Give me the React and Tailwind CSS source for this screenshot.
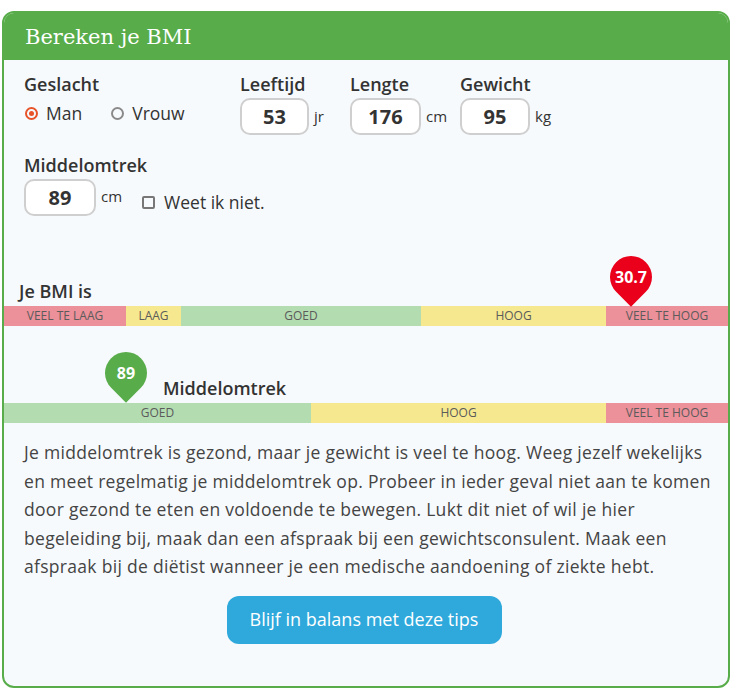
const SANS = { fontFamily: '"Open Sans", "Noto Sans", sans-serif' };

const BMI_BANDS = [
  { label: 'VEEL TE LAAG', w: 122, color: 'bg-[#ec9099]' },
  { label: 'LAAG', w: 55, color: 'bg-[#f6e88f]' },
  { label: 'GOED', w: 240, color: 'bg-[#b3dcb1]' },
  { label: 'HOOG', w: 185, color: 'bg-[#f6e88f]' },
  { label: 'VEEL TE HOOG', w: 122, color: 'bg-[#ec9099]' },
];

const WAIST_BANDS = [
  { label: 'GOED', w: 307, color: 'bg-[#b3dcb1]' },
  { label: 'HOOG', w: 295, color: 'bg-[#f6e88f]' },
  { label: 'VEEL TE HOOG', w: 122, color: 'bg-[#ec9099]' },
];

function Bar({ bands }) {
  return (
    <div className="flex h-[20px] w-full">
      {bands.map((b, i) => (
        <div
          key={i}
          style={{ width: b.w }}
          className={`${b.color} flex items-center justify-center text-[12px] leading-none text-[#5b5b5b]`}
        >
          {b.label}
        </div>
      ))}
    </div>
  );
}

function Pin({ value, color, left, top }) {
  return (
    <div className="absolute h-[52px] w-[42px]" style={{ left, top }}>
      <div
        className={`absolute left-0 top-0 h-[42px] w-[42px] rotate-45 rounded-full rounded-br-none ${color}`}
      />
      <div className="absolute left-0 top-0 flex h-[42px] w-[42px] items-center justify-center text-[16px] font-bold text-white">
        {value}
      </div>
    </div>
  );
}

function NumberField({ label, value, unit, width }) {
  return (
    <div className="flex flex-col">
      <span className="text-[18px] font-semibold leading-[22px] text-[#333]">{label}</span>
      <div className="mt-[3px] flex items-center">
        <div
          style={{ width }}
          className="flex h-[37px] items-center justify-center rounded-[10px] border-2 border-[#cfcfcf] bg-white text-[20px] font-bold text-[#333]"
        >
          {value}
        </div>
        <span className="ml-[5px] text-[15px] text-[#333]">{unit}</span>
      </div>
    </div>
  );
}

export default function App() {
  return (
    <div className="min-h-[695px] bg-white pl-[2px] pt-[11px]" style={SANS}>
      <div className="flex h-[677px] w-[728px] flex-col overflow-hidden rounded-[12px] border-2 border-[#58ad4a] bg-[#f7fafc]">
        <div className="flex h-[47px] shrink-0 items-center bg-[#58ad4a] pl-[21px] pt-[2px]">
          <h1
            className="text-[21px] text-white"
            style={{ fontFamily: '"DejaVu Serif", serif' }}
          >
            Bereken je BMI
          </h1>
        </div>

        <div className="flex pl-[20px] pt-[13px]">
          <div className="flex w-[216px] flex-col">
            <span className="text-[18px] font-semibold leading-[22px] text-[#333]">Geslacht</span>
            <div className="mt-[5px] flex items-center text-[17.5px] text-[#333]">
              <span className="ml-[1px] flex h-[13px] w-[13px] items-center justify-center rounded-full border-2 border-[#e8542a]">
                <span className="h-[5px] w-[5px] rounded-full bg-[#e8542a]" />
              </span>
              <span className="ml-[8px]">Man</span>
              <span className="ml-[29px] h-[13px] w-[13px] rounded-full border-2 border-[#8a8a8a]" />
              <span className="ml-[8px]">Vrouw</span>
            </div>
          </div>
          <div className="flex">
            <div className="w-[110px]">
              <NumberField label="Leeftijd" value="53" unit="jr" width={69} />
            </div>
            <div className="w-[110px]">
              <NumberField label="Lengte" value="176" unit="cm" width={71} />
            </div>
            <NumberField label="Gewicht" value="95" unit="kg" width={70} />
          </div>
        </div>

        <div className="flex flex-col pl-[20px] pt-[19px]">
          <span className="text-[18px] font-semibold leading-[22px] text-[#333]">Middelomtrek</span>
          <div className="mt-[3px] flex items-start">
            <div className="flex h-[37px] w-[72px] items-center justify-center rounded-[10px] border-2 border-[#cfcfcf] bg-white text-[20px] font-bold text-[#333]">
              89
            </div>
            <span className="ml-[5px] mt-[6px] text-[15px] text-[#333]">cm</span>
            <span className="ml-[20px] mt-[17px] h-[13px] w-[13px] rounded-[2px] border-2 border-[#777]" />
            <span className="ml-[9px] mt-[10px] text-[17.5px] text-[#333]">Weet ik niet.</span>
          </div>
        </div>

        <div className="relative mt-[64px] flex flex-col">
          <span className="pl-[15px] text-[18px] font-semibold leading-[22px] text-[#333]">Je BMI is</span>
          <div className="mt-[4px]">
            <Bar bands={BMI_BANDS} />
          </div>
          <Pin value="30.7" color="bg-[#ea001b]" left={606} top={-24} />
        </div>

        <div className="relative mt-[51px] flex flex-col">
          <span className="pl-[159px] text-[18px] font-semibold leading-[22px] text-[#333]">Middelomtrek</span>
          <div className="mt-[4px]">
            <Bar bands={WAIST_BANDS} />
          </div>
          <Pin value="89" color="bg-[#58ad4a]" left={101} top={-25} />
        </div>

        <p className="mt-[15px] pl-[20px] pr-[12px] text-[17.5px] leading-[28.5px] tracking-[0.3px] text-[#444]">
          Je middelomtrek is gezond, maar je gewicht is veel te hoog. Weeg jezelf wekelijks en meet regelmatig je middelomtrek op. Probeer in ieder geval niet aan te komen door gezond te eten en voldoende te bewegen. Lukt dit niet of wil je hier begeleiding bij, maak dan een afspraak bij een gewichtsconsulent. Maak een afspraak bij de diëtist wanneer je een medische aandoening of ziekte hebt.
        </p>

        <div className="mt-[15px] flex justify-center pr-[4px]">
          <button
            type="button"
            className="flex h-[48px] w-[275px] items-center justify-center rounded-[12px] bg-[#2fa9dc] text-[18px] text-white"
          >
            Blijf in balans met deze tips
          </button>
        </div>
      </div>
    </div>
  );
}
